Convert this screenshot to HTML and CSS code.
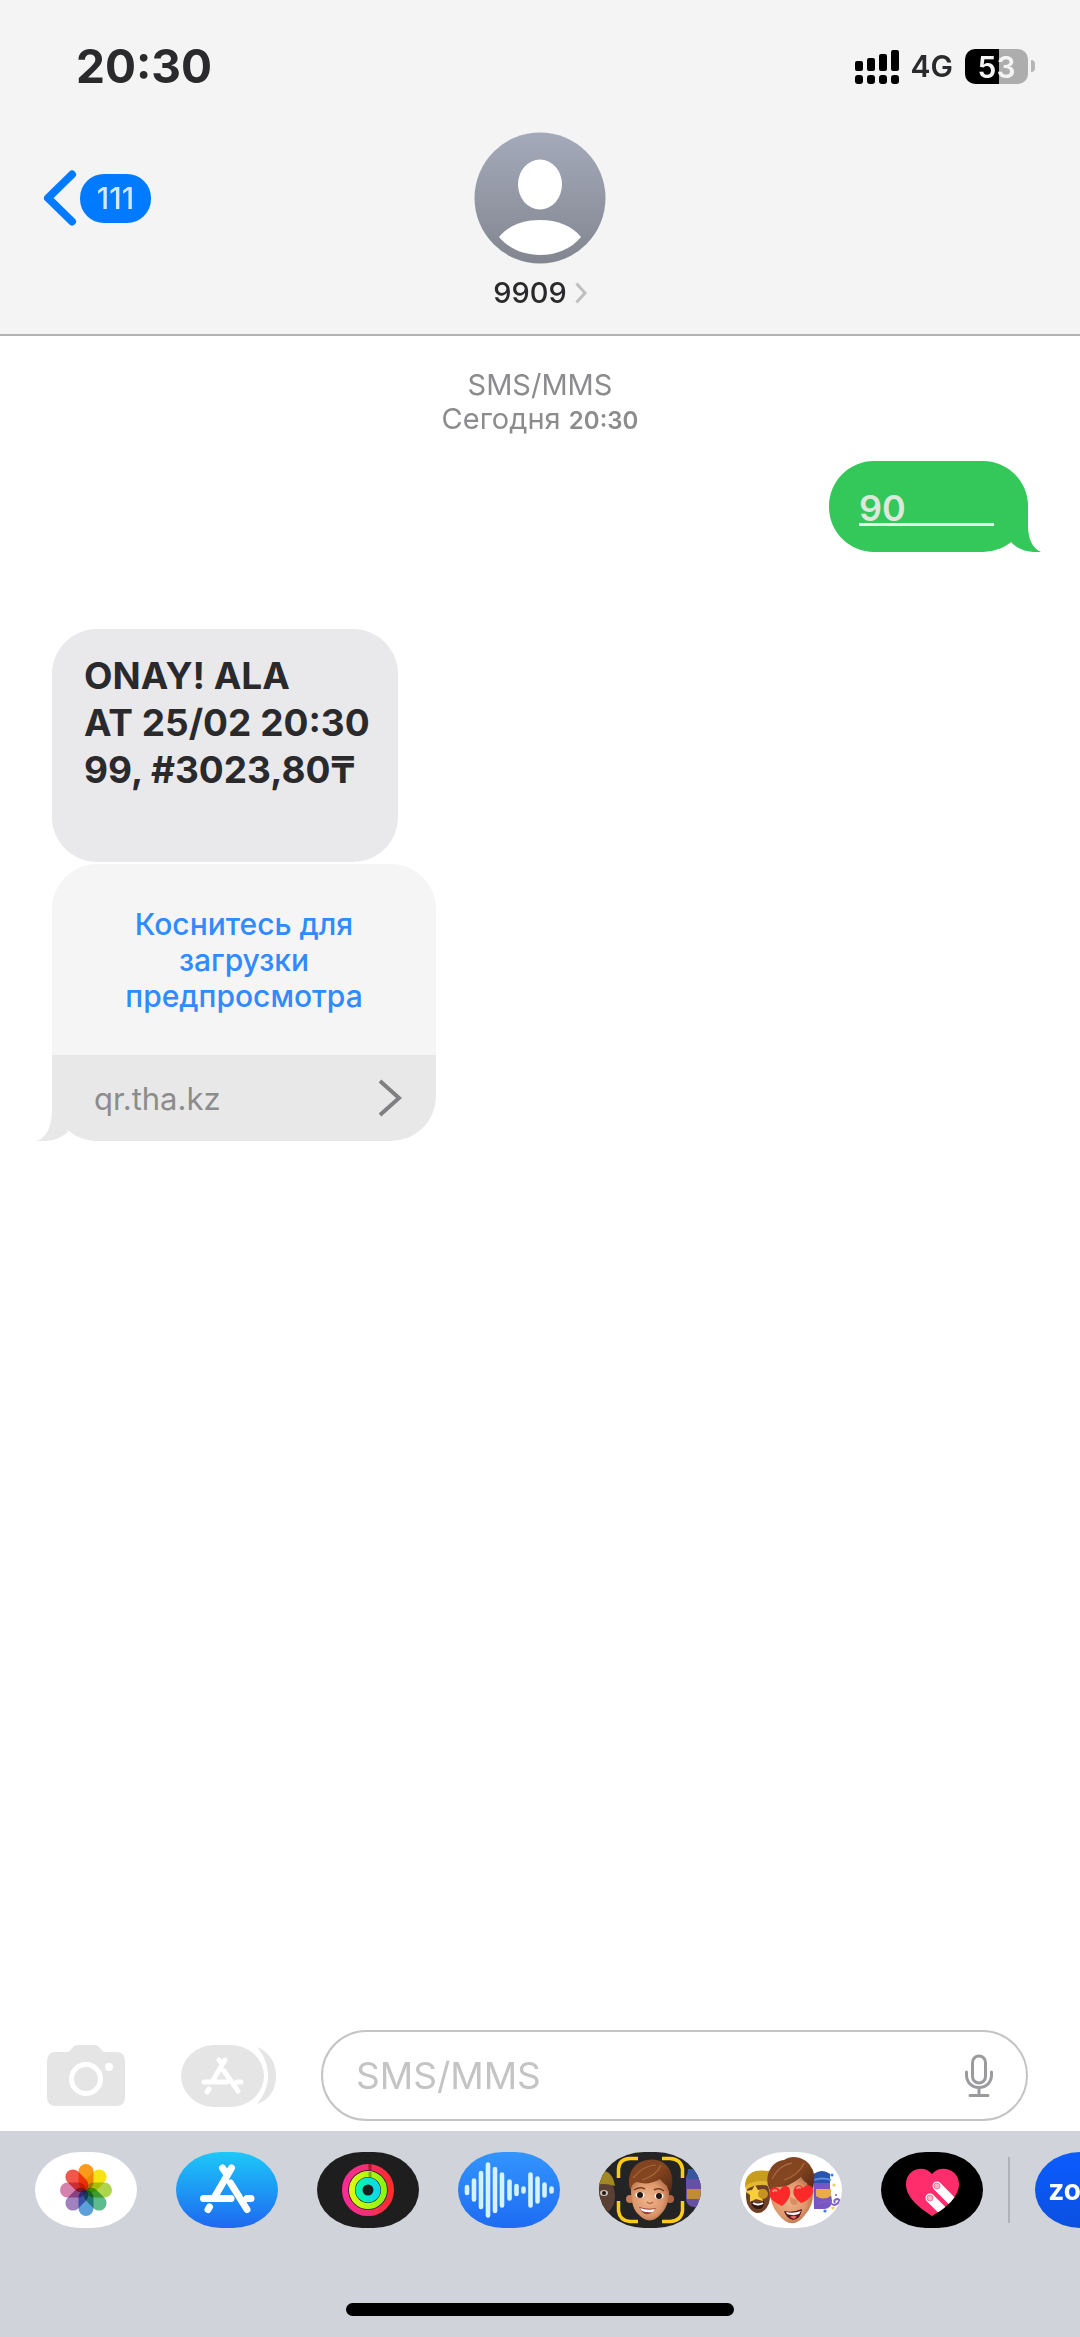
FILE: index.html
```html
<!DOCTYPE html>
<html lang="ru">
<head>
<meta charset="utf-8">
<meta name="viewport" content="width=device-width, initial-scale=1">
<title>9909</title>
<link rel="stylesheet" href="styles.css">
</head>
<body>
<header class="header">
  <div class="status">
    <time class="clock">20:30</time>
    <div class="indicators">
      <svg class="signal" width="44" height="35" viewBox="0 0 44 35" aria-hidden="true">
        <rect x="0" y="12" width="8" height="10" rx="2"/><rect x="12" y="9" width="8" height="13" rx="2"/><rect x="24" y="5" width="8" height="17" rx="2"/><rect x="36" y="1" width="8" height="21" rx="2"/>
        <rect x="0" y="26" width="8" height="9" rx="3"/><rect x="12" y="26" width="8" height="9" rx="3"/><rect x="24" y="26" width="8" height="9" rx="3"/><rect x="36" y="26" width="8" height="9" rx="3"/>
      </svg>
      <span class="network">4G</span>
      <span class="battery"><span class="charge">53</span><span class="battery-tip"></span></span>
    </div>
  </div>
  <nav class="nav">
    <button class="back" type="button" aria-label="Назад">
      <svg width="34" height="56" viewBox="0 0 34 56" aria-hidden="true"><path d="M29 4.500 5 28l24 23.500" fill="none" stroke="#007aff" stroke-width="8" stroke-linecap="round" stroke-linejoin="round"/></svg>
      <span class="unread">111</span>
    </button>
    <button class="contact" type="button">
      <svg width="132" height="132" viewBox="0 0 132 132" aria-hidden="true">
        <defs><linearGradient id="av" x1="0" y1="0" x2="0" y2="1"><stop offset="0" stop-color="#a4aaba"/><stop offset="1" stop-color="#838690"/></linearGradient></defs>
        <circle cx="66" cy="66" r="65.500" fill="url(#av)"/>
        <ellipse cx="66" cy="52.500" rx="22" ry="25" fill="#fff"/>
        <path d="M25 105C34 94 48 88 66 88s32 6 41 17C97 117 82 123 66 123S35 117 25 105z" fill="#fff"/>
      </svg>
      <span class="name">9909
        <svg width="12" height="22" viewBox="0 0 12 22" aria-hidden="true"><path d="M1.500 1.500 10 11 1.500 20.500" fill="none" stroke="#bfbfc1" stroke-width="3"/></svg>
      </span>
    </button>
  </nav>
</header>

<main class="thread">
  <p class="stamp"><span class="service">SMS/MMS</span><span class="day">Сегодня <time>20:30</time></span></p>

  <div class="bubble sent">
    <span class="code">90</span>
    <svg class="tail tail-right" width="32" height="46" viewBox="0 0 32 46" aria-hidden="true"><path d="M19 0V20C19 32 23 42 32 46C19 47 8 43 2 36z" fill="#34c759"/></svg>
  </div>

  <div class="bubble received">ONAY! ALA<br>AT 25/02 20:30<br>99, #3023,80₸</div>

  <a class="card" href="#preview">
    <span class="card-title">Коснитесь для<br>загрузки<br>предпросмотра</span>
    <span class="card-link">qr.tha.kz
      <svg width="24" height="38" viewBox="0 0 24 38" aria-hidden="true"><path d="M2 2 21 19 2 36" fill="none" stroke="#808082" stroke-width="4"/></svg>
    </span>
    <svg class="tail tail-left" width="32" height="46" viewBox="0 0 32 46" aria-hidden="true"><path d="M15 0V14C15 31 10 42 0 46C13 47 23 44 31 37z" fill="#e8e8e9"/></svg>
  </a>
</main>

<footer class="footer">
  <form class="compose">
    <button class="tool" type="button" aria-label="Камера">
      <svg width="78" height="64" viewBox="0 0 78 64" aria-hidden="true">
        <path d="M9 8H20C24 8 25 1 31 1H47C53 1 54 8 58 8H69Q78 8 78 17V53Q78 62 69 62H9Q0 62 0 53V17Q0 8 9 8z" fill="#e5e5e5"/>
        <circle cx="39" cy="35" r="14.500" fill="none" stroke="#fff" stroke-width="5"/><circle cx="62" cy="23" r="4" fill="#fff"/>
      </svg>
    </button>
    <button class="tool" type="button" aria-label="Приложения">
      <svg width="96" height="64" viewBox="0 0 96 64" aria-hidden="true">
        <path d="M76 3C88 8 95 18 95 32S88 56 76 60C82 53 87 43 87 32S83 11 76 3z" fill="#e5e5e5"/>
        <rect x="0" y="1" width="83" height="62" rx="34" ry="31" fill="#e5e5e5"/>
        <g stroke="#fff" stroke-width="5" stroke-linecap="round"><path d="M44 16 31 38M38 16 41 20M23 38H46M56 38H60M43 27 57 47M28 45 26 48"/></g>
      </svg>
    </button>
    <div class="field">
      <input class="message" type="text" placeholder="SMS/MMS" aria-label="Сообщение">
      <button class="mic" type="button" aria-label="Диктовка">
        <svg width="28" height="44" viewBox="0 0 28 44" fill="none" stroke="#9b9b9d" stroke-width="3" stroke-linecap="round" aria-hidden="true"><rect x="7.500" y="2" width="13" height="27" rx="6.500"/><path d="M1.500 18v3c0 7 5 12.500 12.500 12.500S26.500 28 26.500 21V18M14 34v7M5 41.500H23"/></svg>
      </button>
    </div>
  </form>

  <div class="dock">
    <div class="apps">
      <button class="app photos" type="button" aria-label="Фото">
        <svg viewBox="0 0 102 76" aria-hidden="true"><g class="petals">
          <rect x="43.500" y="12" width="15" height="26" rx="7.500" fill="#f99a1d"/>
          <rect x="43.500" y="12" width="15" height="26" rx="7.500" fill="#f5e313" transform="rotate(45 51 38)"/>
          <rect x="43.500" y="12" width="15" height="26" rx="7.500" fill="#aed54c" transform="rotate(90 51 38)"/>
          <rect x="43.500" y="12" width="15" height="26" rx="7.500" fill="#5dbb8c" transform="rotate(135 51 38)"/>
          <rect x="43.500" y="12" width="15" height="26" rx="7.500" fill="#5b9fdb" transform="rotate(180 51 38)"/>
          <rect x="43.500" y="12" width="15" height="26" rx="7.500" fill="#a082c1" transform="rotate(225 51 38)"/>
          <rect x="43.500" y="12" width="15" height="26" rx="7.500" fill="#d681ad" transform="rotate(270 51 38)"/>
          <rect x="43.500" y="12" width="15" height="26" rx="7.500" fill="#f3574c" transform="rotate(315 51 38)"/>
        </g></svg>
      </button>
      <button class="app store" type="button" aria-label="App Store">
        <svg viewBox="0 0 102 76" aria-hidden="true"><g stroke="#fff" stroke-width="7" stroke-linecap="round"><path d="M55.500 16 38 46M46.500 16 50 21M27.500 46.500H55M71 46.500H75M54.500 31 71 57.500M33.500 55 32 57.500"/></g></svg>
      </button>
      <button class="app activity" type="button" aria-label="Активность">
        <svg viewBox="0 0 102 76" fill="none" aria-hidden="true">
          <defs><linearGradient id="r1"><stop offset="0" stop-color="#fa2b95"/><stop offset=".5" stop-color="#f0306b"/><stop offset="1" stop-color="#ff2c2c"/></linearGradient><linearGradient id="r2"><stop offset="0" stop-color="#d4fc12"/><stop offset="1" stop-color="#8df313"/></linearGradient><linearGradient id="r3"><stop offset="0" stop-color="#09f3b1"/><stop offset="1" stop-color="#0bd9ed"/></linearGradient></defs>
          <circle cx="51" cy="38" r="22.900" stroke="url(#r1)" stroke-width="6.200"/>
          <circle cx="51" cy="38" r="16" stroke="url(#r2)" stroke-width="6"/>
          <circle cx="51" cy="38" r="9" stroke="url(#r3)" stroke-width="7"/>
          <path d="M53 12V18" stroke="#a51d29" stroke-width="3"/><path d="M53 20V25" stroke="#7daf16" stroke-width="3"/>
        </svg>
      </button>
      <button class="app audio" type="button" aria-label="Аудио">
        <svg viewBox="0 0 102 76" stroke="#d5f3ff" stroke-width="4.600" stroke-linecap="round" aria-hidden="true"><path d="M9 35V41M16 28.500V47.500M23 21V55M30 12.500V63.500M37 17V59M44 22.500V53.500M51.500 29.500V46.500M58.500 34V42M65.500 36.500V39.500M72.500 22.500V53.500M79.500 26.500V49.500M86.500 32.500V43.500M93.500 36.500V39.500"/></svg>
      </button>
      <button class="app memoji" type="button" aria-label="Memoji">
        <svg viewBox="0 0 102 76" aria-hidden="true">
          <defs><radialGradient id="skin" cx=".45" cy=".5" r=".6"><stop offset="0" stop-color="#f0b58c"/><stop offset=".65" stop-color="#dd976b"/><stop offset="1" stop-color="#ad6742"/></radialGradient><linearGradient id="hair" x1="0" y1="0" x2="1" y2="1"><stop offset="0" stop-color="#7c4322"/><stop offset=".5" stop-color="#854620"/><stop offset="1" stop-color="#4c2412"/></linearGradient></defs>
          <ellipse cx="3" cy="44" rx="13" ry="18" fill="#5b4036"/><path d="M-8 34C-5 15 13 13 16 34Q4 30-8 34z" fill="#a38723"/><ellipse cx="5" cy="41" rx="4" ry="3" fill="#ccc1b9"/><circle cx="5" cy="41" r="2" fill="#211815"/>
          <rect x="87" y="19" width="20" height="36" rx="8" fill="#6650a5"/><path d="M89 17h14v10H88z" fill="#36589e"/><path d="M88 37h16v10H88z" fill="#c18c37"/>
          <circle cx="31" cy="47" r="4" fill="#c57d54"/><circle cx="71" cy="47" r="4" fill="#af6842"/>
          <path d="M32 31Q31 55 39 62Q51 75 62 62Q72 52 70 31Q51 20 32 31z" fill="url(#skin)"/>
          <path d="M31 37C27 21 36 9 49 8C66 5 79 20 71 43L68 34Q64 31 61 27Q49 34 38 30Q33 31 32 37z" fill="url(#hair)"/>
          <path d="M34 26Q45 13 57 13M43 28Q57 24 62 13" fill="none" stroke="#a9663a" stroke-width="1.200"/>
          <ellipse cx="41" cy="43" rx="4.500" ry="3" fill="#fff"/><ellipse cx="60" cy="44" rx="4.500" ry="3" fill="#fff"/><circle cx="41" cy="43" r="3" fill="#26160f"/><circle cx="60" cy="44" r="3" fill="#26160f"/>
          <path d="M35 38Q41 34 46 37M55 38Q60 35 65 39" fill="none" stroke="#76401f" stroke-width="1.500"/><path d="M48 50Q51 53 54 50" fill="none" stroke="#b66c45" stroke-width="1.500"/>
          <path d="M40 55Q49 58 57 56Q50 66 43 60z" fill="#973a35"/><path d="M41 56Q49 59 56 57L54 60Q48 61 43 59z" fill="#fff"/>
          <path d="M19.500 26V17Q20 7 31 6.500H39M63 6.500H71Q82 7 83.500 17V26M19.500 49V59Q21 69 31 69.500H39M63 69.500H71Q82 69 83.500 59V49" fill="none" stroke="#ffcb16" stroke-width="3.500"/>
        </svg>
      </button>
      <button class="app stickers" type="button" aria-label="Стикеры Memoji">
        <svg viewBox="0 0 102 76" aria-hidden="true">
          <ellipse cx="18" cy="44" rx="12" ry="17" fill="#6d4027"/><path d="M5 35C5 20 15 17 29 19V32Q15 29 5 35z" fill="#c89c1c"/><path d="M5 34Q16 27 29 30V34Q16 31 6 38z" fill="#e3b72f"/>
          <path d="m15 33 3 5 7-1-4 6 2 6-7-2-6 3v-7l-5-4 7-1z" fill="#f8cf3b"/><circle cx="23" cy="42" r="5" fill="#c79323"/><path d="M11 49Q18 53 24 49Q24 58 18 57Q12 57 11 49z" fill="#321610"/><path d="M13 51Q18 54 23 51" stroke="#fff" stroke-width="2" fill="none"/>
          <path d="M73 22Q82 17 90 22V36L92 49Q91 57 84 57H74z" fill="#7756c4"/><path d="M74 22Q82 16 90 22V31H74z" fill="#2c54ac"/><path d="M74 28Q82 25 91 28" fill="none" stroke="#5a91e0" stroke-width="2"/><path d="M76 37H91V44Q83 49 76 44z" fill="#e8ad49"/>
          <path d="M78 52Q88 47 91 51T98 51Q101 47 97 47 93 48 95 51" fill="none" stroke="#8060c5" stroke-width="2"/>
          <circle cx="92" cy="23" r="1.600" fill="#397df0"/><circle cx="94" cy="33" r="1.600" fill="#edce62"/><circle cx="85" cy="59" r="1.600" fill="#397df0"/><circle cx="93" cy="56" r="1.600" fill="#edce62"/><circle cx="96" cy="43" r="1" fill="#7756c4"/>
          <path d="M31 31Q28 51 38 62Q52 80 65 63Q77 50 71 29Q50 18 31 31z" fill="url(#skin)"/>
          <path d="M30 39C22 22 34 8 44 8C53 1 68 7 71 15C76 21 75 34 70 42L67 31Q63 29 61 25Q49 35 39 35Q33 35 32 40z" fill="url(#hair)"/>
          <path d="M32 27Q39 13 52 11M44 28Q59 23 64 11" fill="none" stroke="#a9663a" stroke-width="1.300"/>
          <path d="M50 45Q49 53 54 53T57 48" fill="#d79063"/>
          <path d="M42 54C34 50 28 46 29 40C31 34 37 34 40 38C43 32 50 33 50 39C51 45 47 50 42 54z" fill="#fb2928"/><path d="M61 51C55 46 52 42 54 37C56 32 61 32 63 36C67 31 73 33 73 39C72 45 67 49 61 51z" fill="#fb2928"/>
          <path d="M33 40Q34 37 37 39M57 37Q58 34 61 36" stroke="#ff9480" stroke-width="2" fill="none"/>
          <path d="M44 59Q53 61 62 57Q61 67 53 68Q46 66 44 59z" fill="#5d171c"/><path d="M46 60Q53 62 61 59L59 62Q53 64 47 62z" fill="#fff"/><path d="M50 65Q54 62 57 65L54 67z" fill="#ef6361"/>
        </svg>
      </button>
      <button class="app touch" type="button" aria-label="Digital Touch">
        <svg viewBox="0 0 102 76" aria-hidden="true">
          <defs><clipPath id="heart"><path d="M51 64C37 55 25 45 25 32C25 17 43 12 51 22C59 12 78 17 78 32C78 45 65 56 51 64z"/></clipPath></defs>
          <g clip-path="url(#heart)"><path d="M24 14h56v52H24z" fill="#ff2d6b"/><path d="M56 34 78 56M49 46 67 64" stroke="#fff" stroke-width="9" stroke-linecap="round"/><circle cx="56" cy="34" r="3" fill="#ffb1c8" stroke="#ec799e"/><circle cx="49" cy="46" r="3" fill="#ffb1c8" stroke="#ec799e"/></g>
        </svg>
      </button>
      <span class="divider"></span>
      <button class="app zoom" type="button">zoom</button>
    </div>
    <div class="home"></div>
  </div>
</footer>
</body>
</html>
```
FILE: styles.css
```css
* { box-sizing: border-box; }

body {
  margin: 0;
  min-height: 100vh;
  display: flex;
  flex-direction: column;
  background: #fff;
  color: #2a2a2c;
  font-family: Inter, "Noto Sans", sans-serif;
  overflow-x: hidden;
}

button {
  padding: 0;
  border: 0;
  background: none;
  font: inherit;
  color: inherit;
}

svg { display: block; flex: none; }

/* Header */
.header {
  background: #f4f4f4;
  border-bottom: 2px solid #b2b2b2;
}

.status {
  display: flex;
  align-items: center;
  justify-content: space-between;
  height: 132px;
  padding: 0 45px 0 76px;
}

.clock { font-size: 46px; font-weight: 700; }

.indicators { display: flex; align-items: center; gap: 12px; }

.network { font-size: 30px; font-weight: 600; }

.battery { display: flex; align-items: center; gap: 3px; }

.charge {
  width: 63px;
  height: 35px;
  border-radius: 10px;
  background: linear-gradient(90deg, #000 54%, #adadad 54%);
  color: #f4f4f4;
  font-size: 30px;
  font-weight: 600;
  line-height: 36px;
  text-align: center;
}

.battery-tip {
  width: 4px;
  height: 12px;
  border-radius: 0 4px 4px 0;
  background: #b5b5b5;
}

.nav {
  display: grid;
  grid-template-columns: 1fr auto 1fr;
  align-items: start;
  height: 202px;
  padding: 0 43px;
}

.back {
  display: flex;
  align-items: center;
  gap: 3px;
  margin-top: 38px;
  justify-self: start;
}

.unread {
  width: 71px;
  height: 49px;
  border-radius: 24px;
  background: #007aff;
  color: #d3e7ff;
  font-size: 30px;
  font-weight: 500;
  line-height: 49px;
  text-align: center;
}

.contact {
  display: flex;
  flex-direction: column;
  align-items: center;
  gap: 11px;
}

.name {
  display: flex;
  align-items: center;
  gap: 8px;
  font-size: 29px;
  font-weight: 500;
  line-height: 36px;
}

/* Conversation */
.thread {
  flex: 1;
  display: flex;
  flex-direction: column;
  align-items: flex-start;
  padding: 32px 52px;
}

.stamp {
  align-self: center;
  display: flex;
  flex-direction: column;
  align-items: center;
  margin: 0 0 23px;
  color: #8c8c8e;
  font-size: 29px;
  line-height: 34px;
}

.stamp time { font-size: 24px; font-weight: 600; }

.bubble {
  position: relative;
  border-radius: 45px;
  font-size: 36px;
  font-weight: 600;
}

.sent {
  align-self: flex-end;
  padding: 32px 34px 26px 30px;
  margin-bottom: 77px;
  background: #34c759;
}

.code {
  display: block;
  min-width: 135px;
  border-bottom: 3px solid #e4f7e8;
  color: #dde8dd;
  line-height: 30px;
}

.received {
  padding: 23px 28px 69px 32px;
  margin-bottom: 2px;
  background: #e9e9eb;
  font-size: 37px;
  font-weight: 700;
  line-height: 47px;
}

.tail { position: absolute; bottom: 0; }
.tail-right { right: -13px; }
.tail-left { left: -15px; }

.card {
  position: relative;
  width: 384px;
  text-decoration: none;
}

.card-title {
  display: flex;
  align-items: center;
  justify-content: center;
  height: 191px;
  border-radius: 45px 45px 0 0;
  background: #f5f5f5;
  color: #2f8bff;
  font-size: 30px;
  font-weight: 500;
  line-height: 36px;
  text-align: center;
}

.card-link {
  display: flex;
  align-items: center;
  justify-content: space-between;
  height: 86px;
  padding: 0 34px 0 42px;
  border-radius: 0 0 45px 45px;
  background: #e8e8e9;
  color: #8c8c8e;
  font-size: 31px;
}

/* Compose bar */
.compose {
  display: flex;
  align-items: center;
  padding: 0 52px 10px 47px;
}

.tool + .tool { margin-left: 56px; }

.field {
  flex: 1;
  display: flex;
  align-items: center;
  height: 91px;
  margin-left: 44px;
  padding: 0 33px;
  border: 2px solid #c4c4c4;
  border-radius: 46px;
}

.message {
  flex: 1;
  min-width: 0;
  padding: 0;
  border: 0;
  outline: 0;
  background: none;
  font: 37px Inter, "Noto Sans", sans-serif;
}

.message::placeholder { color: #c4c4c4; opacity: 1; }

/* App dock */
.dock {
  padding: 21px 0;
  background: #d1d3da;
}

.apps {
  display: flex;
  align-items: center;
  gap: 39px;
  padding-left: 35px;
  overflow: hidden;
}

.app {
  flex: none;
  width: 102px;
  height: 76px;
  border-radius: 45px / 38px;
  overflow: hidden;
}

.photos, .stickers { background: #fff; }
.petals { isolation: isolate; }
.petals rect { mix-blend-mode: multiply; }
.store { background: linear-gradient(#1dc8f8, #1e68f1); }
.activity { background: #1e1e1f; }
.audio { background: linear-gradient(#3395fd, #1d6bf2); }
.memoji { background: #242424; }
.touch { background: #000; }

.zoom {
  background: linear-gradient(#0b5cff, #0b50e0);
  color: #fff;
  font-size: 28px;
  font-weight: 700;
}

.divider {
  flex: none;
  width: 2px;
  height: 66px;
  margin: 0 -14px;
  background: #b0b2b8;
}

.home {
  width: 36%;
  height: 13px;
  margin: 75px auto 0;
  border-radius: 7px;
  background: #000;
}
```
